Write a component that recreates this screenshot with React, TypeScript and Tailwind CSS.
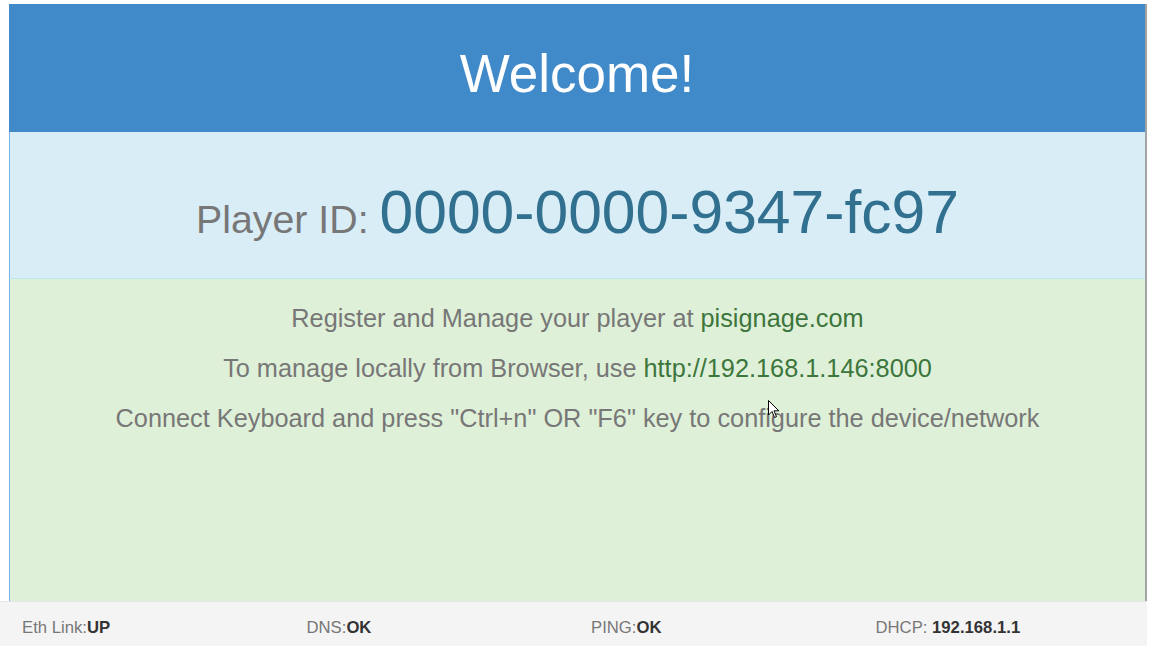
import React from "react";

const font = { fontFamily: '"Liberation Sans", Arial, sans-serif' };

function StatusItem({ label, value }: { label: string; value: string }) {
  return (
    <div className="text-[16.7px] leading-[20px] text-[#777]">
      {label}
      <b className="font-bold text-[#333]">{value}</b>
    </div>
  );
}

function Cursor() {
  return (
    <svg
      className="absolute left-[768px] top-[400px]"
      width="12"
      height="19"
      viewBox="0 0 12 19"
    >
      <path
        d="M0.5 0.5 L0.5 15 L4 11.5 L6.5 17.5 L8.5 16.7 L6 10.8 L10.8 10.8 Z"
        fill="#fff"
        stroke="#000"
        strokeWidth="1"
        strokeLinejoin="round"
      />
    </svg>
  );
}

export default function App() {
  return (
    <div
      className="relative flex h-[646px] w-[1150px] flex-col overflow-hidden bg-white"
      style={font}
    >
      <div className="flex flex-col pl-[9px] pr-[3px] pt-[4px]">
        <div className="flex flex-col border-r-2 border-[#a3a3a3]">
          {/* banner */}
          <div className="h-[128px] bg-[#408aca] pt-[43px] text-center text-[53px] leading-[53px] text-white">
            Welcome!
          </div>

          {/* player id */}
          <div className="h-[147px] border-b border-l border-[#bce8f1] border-l-[#7fb2e0] bg-[#d9edf7] pt-[50px] text-center text-[60.6px] leading-[60px] text-[#31708f]">
            <span className="text-[39.3px] text-[#777]">Player ID: </span>
            0000-0000-9347-fc97
          </div>

          {/* instructions */}
          <div className="flex h-[322px] border-l border-[#7fb2e0] bg-[#dff0d8]">
            <div className="flex-1 pt-[14px] text-center text-[25.3px] leading-[50px] text-[#777]">
              <p>
                Register and Manage your player at{" "}
                <span className="text-[#3c763d]">pisignage.com</span>
              </p>
              <p>
                To manage locally from Browser, use{" "}
                <span className="text-[#3c763d]">http://192.168.1.146:8000</span>
              </p>
              <p>
                Connect Keyboard and press "Ctrl+n" OR "F6" key to configure the
                device/network
              </p>
            </div>
          </div>
        </div>
      </div>

      {/* status bar */}
      <div className="mr-[3px] flex-1 border-t border-[#e5e5e5] bg-[#f4f4f4] pl-[22px]">
        <div className="grid grid-cols-[repeat(4,284.5px)] pt-[16px]">
          <StatusItem label="Eth Link:" value="UP" />
          <StatusItem label="DNS:" value="OK" />
          <StatusItem label="PING:" value="OK" />
          <StatusItem label="DHCP: " value="192.168.1.1" />
        </div>
      </div>

      <Cursor />
    </div>
  );
}
